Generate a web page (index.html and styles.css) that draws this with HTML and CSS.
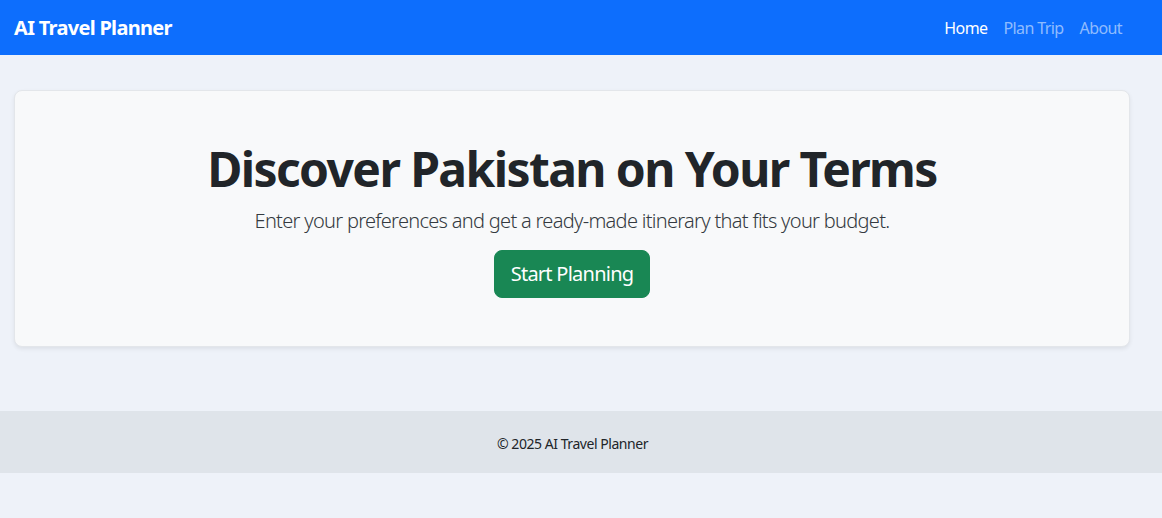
FILE: index.html
```html
<!DOCTYPE html>
<html lang="en">
<head>
<meta charset="utf-8">
<title>AI Travel Planner</title>
<link rel="stylesheet" href="styles.css">
</head>
<body>
<nav class="navbar">
  <a class="brand" href="#">AI Travel Planner</a>
  <ul class="nav">
    <li><a class="nav-link active" href="#">Home</a></li>
    <li><a class="nav-link" href="#">Plan Trip</a></li>
    <li><a class="nav-link" href="#">About</a></li>
  </ul>
</nav>
<main class="container">
  <section class="hero">
    <h1 class="hero-title">Discover Pakistan on Your Terms</h1>
    <p class="lead">Enter your preferences and get a ready-made itinerary that fits your budget.</p>
    <a class="btn" href="#">Start Planning</a>
  </section>
</main>
<footer class="footer">© 2025 AI Travel Planner</footer>
</body>
</html>
```
FILE: styles.css
```css
* { box-sizing: border-box; }
html, body { margin: 0; }
body {
  background: #eef2f9;
  font-family: "Noto Sans", "Open Sans", sans-serif;
  color: #212529;
  font-size: 16px;
  line-height: 1.5;
}
a { text-decoration: none; }
.navbar {
  background: #0d6efd;
  height: 55px;
  display: flex;
  align-items: center;
  justify-content: space-between;
  padding: 0 32px 0 14px;
}
.brand {
  color: #fff;
  font-size: 20px;
  font-weight: 700;
  letter-spacing: -0.7px;
}
.nav {
  list-style: none;
  margin: 0;
  padding: 0;
  display: flex;
}
.nav-link {
  display: block;
  padding: 8px 8px;
  color: rgba(255,255,255,0.55);
  font-size: 16px;
  letter-spacing: -0.6px;
}
.nav-link.active { color: #fff; }
.container {
  padding: 35px 32px 0 14px;
}
.hero {
  background: #f8f9fa;
  border: 1px solid #e3e6ea;
  border-radius: 8px;
  box-shadow: 0 2px 4px rgba(0,0,0,0.075);
  padding: 49px 48px 0;
  text-align: center;
  height: 257px;
}
.hero-title {
  margin: 0 0 8px;
  font-size: 48px;
  line-height: 1.2;
  font-weight: 700;
  letter-spacing: -1.6px;
}
.lead {
  margin: 0 0 14px;
  font-size: 20px;
  font-weight: 300;
  line-height: 1.5;
  color: #343a40;
  letter-spacing: -0.7px;
}
.btn {
  display: inline-block;
  background: #198754;
  color: #fff;
  font-size: 20px;
  line-height: 30px;
  padding: 8px 16px;
  border: 1px solid #198754;
  border-radius: 8px;
  letter-spacing: -0.75px;
}
.footer {
  margin-top: 64px;
  background: #dfe4ea;
  text-align: center;
  font-size: 14px;
  height: 62px;
  line-height: 62px;
  padding: 2px 17px 0 0;
  color: #212529;
  letter-spacing: -0.45px;
}
```
